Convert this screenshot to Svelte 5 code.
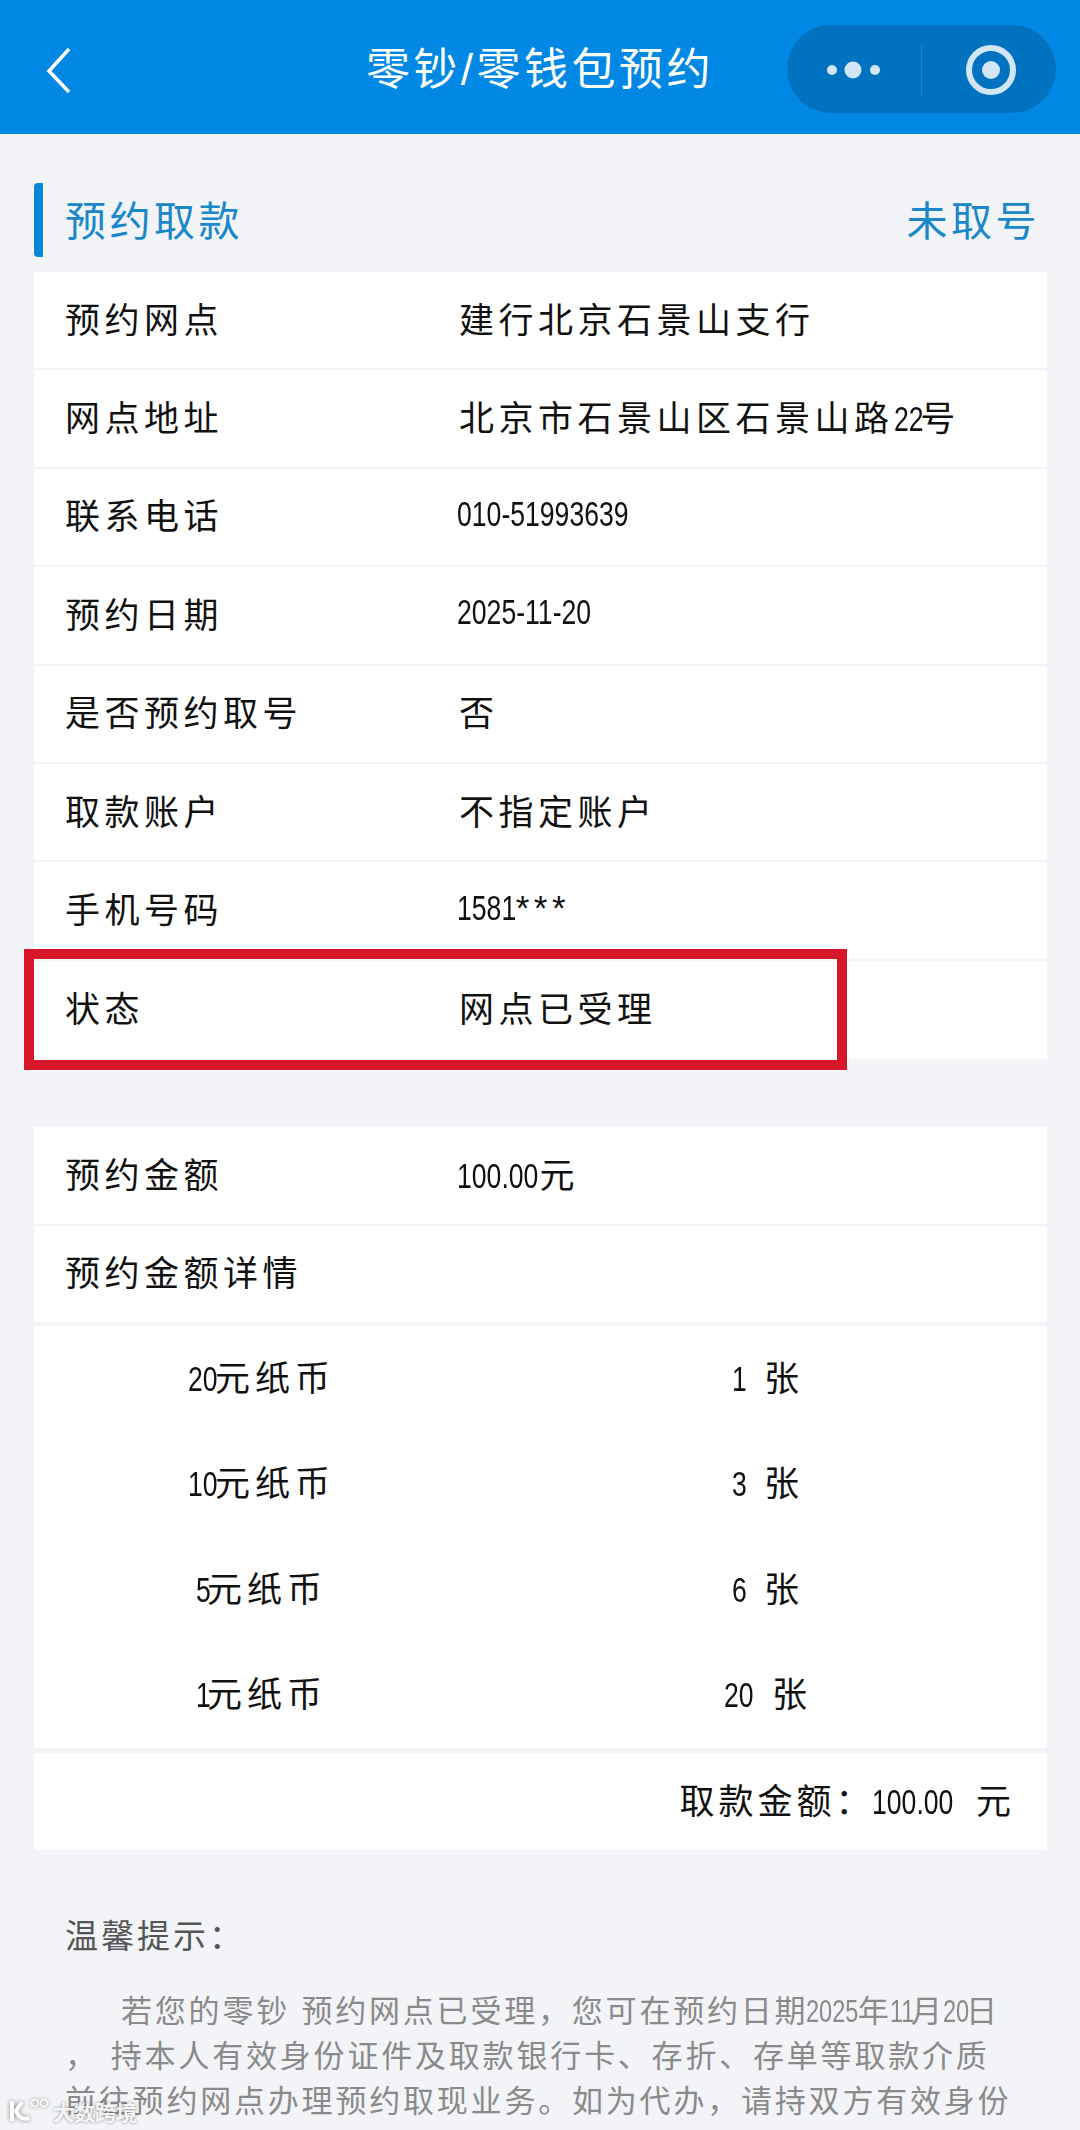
<script>
  const rows = [
    ['预约网点', '建行北京石景山支行'],
    ['网点地址', '北京市石景山区石景山路22号'],
    ['联系电话', '010-51993639'],
    ['预约日期', '2025-11-20'],
    ['是否预约取号', '否'],
    ['取款账户', '不指定账户'],
    ['手机号码', '1581***'],
    ['状态', '网点已受理']
  ];
  const notes = [
    ['20元纸币', '1'],
    ['10元纸币', '3'],
    ['5元纸币', '6'],
    ['1元纸币', '20']
  ];

  const DIGIT_SCALE = 0.76;

  // the digits in this app are much narrower than any installed font
  function parts(text) {
    return text.split(/([0-9][0-9.\-]*)/).filter(Boolean);
  }

  function squeeze(el) {
    const w = el.getBoundingClientRect().width;
    el.style.marginRight = `${w * (DIGIT_SCALE - 1) - 5}px`;
  }
</script>

{#snippet mixed(text)}{#each parts(text) as part, i}{#if /^[0-9]/.test(part)}<span class="num" class:lead={i === 0} use:squeeze>{part}</span>{:else}{part}{/if}{/each}{/snippet}

<div class="page">
  <header class="topbar">
    <svg class="back" width="30" height="50" viewBox="0 0 30 50" fill="none" stroke="#fff" stroke-width="3.500">
      <path d="M25 3L5 25l20 21" />
    </svg>
    <h1>零钞/零钱包预约</h1>
    <div class="capsule">
      <svg width="269" height="88" viewBox="0 0 269 88">
        <circle cx="45" cy="45" r="5" fill="#d3e6f5" />
        <circle cx="66" cy="45" r="8.500" fill="#d3e6f5" />
        <circle cx="88" cy="45" r="5" fill="#d3e6f5" />
        <line x1="134.500" y1="18" x2="134.500" y2="71" stroke="#1d82cc" />
        <circle cx="204" cy="45" r="22" fill="none" stroke="#d3e6f5" stroke-width="6" />
        <circle cx="204" cy="45" r="9" fill="#d3e6f5" />
      </svg>
    </div>
  </header>

  <main class="content">
    <div class="section-head">
      <span>预约取款</span>
      <span>未取号</span>
    </div>

    <section class="card">
      {#each rows as [label, value]}
        <div class="row">
          <div>{label}</div>
          <div class="value">{@render mixed(value)}</div>
          {#if label === '状态'}<div class="highlight"></div>{/if}
        </div>
      {/each}
    </section>

    <section class="card second">
      <div class="row">
        <div>预约金额</div>
        <div class="value">{@render mixed('100.00元')}</div>
      </div>
      <div class="row">
        <div>预约金额详情</div>
      </div>
      <div class="notes">
        {#each notes as [name, count]}
          <div class="note">
            <div>{@render mixed(name)}</div>
            <div class="count">{@render mixed(count)}<span>张</span></div>
          </div>
        {/each}
      </div>
    </section>

    <section class="card total">
      <div>取款金额：{@render mixed('100.00')}<span class="unit">元</span></div>
    </section>

    <div class="tips">
      <div class="tips-title">温馨提示：</div>
      <p>
        <span class="first">若您的零钞 预约网点已受理，您可在预约日期{@render mixed('2025')}年{@render mixed('11')}月{@render mixed('20')}日</span><br />
        ，<span class="gap"></span>持本人有效身份证件及取款银行卡、存折、存单等取款介质<br />
        前往预约网点办理预约取现业务。如为代办，请持双方有效身份<br />
        证、持委托书、存折、存单等取款介质办理。
      </p>
    </div>
  </main>

  <div class="watermark">
    <svg width="42" height="28" viewBox="0 0 42 28" fill="none" stroke="#fff">
      <path d="M3 4v20" stroke-width="4" />
      <path d="M13 5L7 14c3 7 8 9 13 7" stroke-width="4" />
      <circle cx="26" cy="6" r="3.500" stroke-width="1.500" />
      <circle cx="35" cy="6" r="3.500" stroke-width="1.500" />
    </svg>
    <span>大数跨境</span>
  </div>
</div>

<style>
  :global(body) {
    margin: 0;
    background: #f3f4f7;
  }

  .page {
    position: relative;
    width: 1080px;
    height: 2130px;
    overflow: hidden;
    background: #f3f4f7;
    font-family: "Liberation Sans", "Noto Sans CJK SC", sans-serif;
    font-size: 35px;
    color: #111;
  }

  .num {
    display: inline-block;
    letter-spacing: 0;
    transform: scaleX(0.76);
    transform-origin: 0 50%;
  }

  .num.lead {
    margin-left: -2px;
  }

  .topbar {
    position: relative;
    height: 134px;
    background: #0088e4;
    display: flex;
    align-items: center;
    justify-content: center;
  }

  .topbar h1 {
    margin: 0 0 2px;
    font-size: 44px;
    font-weight: 400;
    letter-spacing: 3.500px;
    color: #fff;
  }

  .back {
    position: absolute;
    left: 44px;
    top: 46px;
  }

  .capsule {
    position: absolute;
    left: 787px;
    top: 25px;
    width: 269px;
    height: 88px;
    border-radius: 44px;
    background: #0072bf;
    overflow: hidden;
  }

  .capsule svg {
    display: block;
  }

  .content {
    padding: 49px 33px 0 34px;
  }

  .section-head {
    height: 74px;
    margin-bottom: 15px;
    padding: 0 7px 4px 22px;
    border-left: 9px solid #0a86d8;
    border-radius: 4px 0 0 4px;
    box-sizing: border-box;
    display: flex;
    align-items: center;
    justify-content: space-between;
    font-size: 41px;
    letter-spacing: 3.500px;
    color: #1a87c9;
  }

  .card {
    background: #fff;
  }

  .card.second {
    margin-top: 68px;
  }

  .row {
    position: relative;
    height: 98.400px;
    box-sizing: border-box;
    padding: 0 0 6px 31px;
    display: grid;
    grid-template-columns: 394px 1fr;
    align-items: center;
    letter-spacing: 4.500px;
    border-bottom: 2px solid #f3f4f7;
  }

  .row:last-child {
    border-bottom: 0;
  }

  .highlight {
    position: absolute;
    left: -10px;
    top: -12px;
    width: 823px;
    height: 121px;
    box-sizing: border-box;
    border: 10px solid #d6172a;
  }

  .notes {
    border-top: 2px solid #f3f4f7;
    height: 424px;
    box-sizing: border-box;
  }

  .note {
    height: 105.500px;
    box-sizing: border-box;
    padding-bottom: 7px;
    display: grid;
    grid-template-columns: 457px 1fr;
    align-items: center;
    justify-items: center;
    letter-spacing: 5px;
  }

  .count span {
    margin-left: 21px;
  }

  .total {
    margin-top: 5px;
    height: 97px;
    padding: 0 32px 5px 0;
    box-sizing: border-box;
    display: flex;
    align-items: center;
    justify-content: flex-end;
    letter-spacing: 4px;
  }

  .unit {
    margin-left: 21px;
  }

  .tips {
    margin-top: 13px;
    padding: 45px 31px 0;
    border-top: 2px solid #eeeff2;
    color: #8a8a8a;
    font-size: 31px;
  }

  .tips-title {
    font-size: 33px;
    color: #555;
    letter-spacing: 3px;
    margin-bottom: 31px;
  }

  .tips p {
    margin: 0;
    line-height: 45px;
    letter-spacing: 2.800px;
    white-space: nowrap;
  }

  .first {
    margin-left: 56px;
  }

  .gap {
    margin-left: 12px;
  }

  .watermark {
    position: absolute;
    left: 9px;
    top: 2096px;
    display: flex;
    align-items: center;
    gap: 2px;
    color: rgba(255, 255, 255, 0.92);
    font-size: 21px;
    font-weight: 700;
    text-shadow: 0 0 3px rgba(60, 60, 60, 0.6);
  }

  .watermark svg {
    filter: drop-shadow(0 0 2px rgba(60, 60, 60, 0.6));
  }
</style>
